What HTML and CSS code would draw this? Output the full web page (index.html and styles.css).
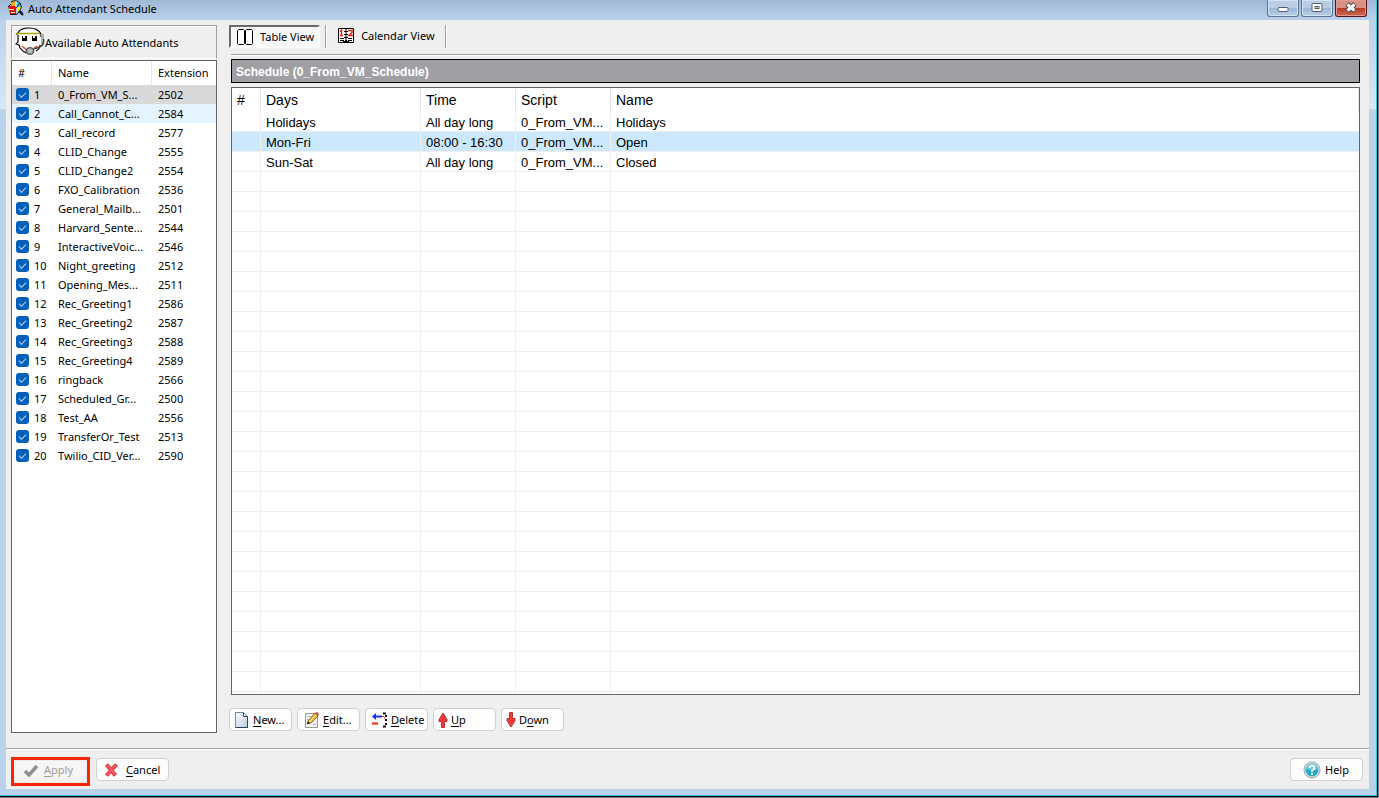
FILE: index.html
```html
<!DOCTYPE html>
<html lang="en">
<head>
<meta charset="utf-8">
<title>Auto Attendant Schedule</title>
<link rel="stylesheet" href="styles.css">
</head>
<body>
<div class="window">
  <header class="titlebar">
    <svg class="app-icon" width="16" height="16" viewBox="0 0 16 16">
      <path d="M3 1h6v6H3z" fill="#f6a800"/><path d="M8 1q5 0 6 6H8z" fill="#2bd2f5"/>
      <path d="M9 7h5q0 5-5 6z" fill="#ffe600"/><path d="M0 6h8v8H2z" fill="#e01414"/>
      <path d="M1 9.500h5M3 12.500h4" stroke="#ff8"/>
      <path d="M3 2q5-3 9 1 3 4 0 8M0 7l3-3M2 14.500h7l2-3M8 8l4-5" stroke="#111" fill="none"/>
      <path d="M8 1v6" stroke="#fff"/>
      <path d="M11 11l4 4" stroke="#111" stroke-width="2"/><path d="M12 10l3 3" stroke="#23f"/>
    </svg>
    <h1 class="title">Auto Attendant Schedule</h1>
    <div class="win-controls">
      <button class="win-btn" aria-label="Minimize"><svg width="12" height="14" viewBox="0 0 12 14"><rect x="1" y="6.500" width="10" height="4" rx="1" fill="#fff" stroke="#555d6b"/></svg></button>
      <button class="win-btn" aria-label="Maximize"><svg width="12" height="14" viewBox="0 0 12 14"><rect x="1" y="2.500" width="10" height="8" rx="1" fill="#fff" stroke="#555d6b"/><rect x="4" y="5.500" width="4" height="2" fill="#a9bfdb" stroke="#555d6b"/></svg></button>
      <button class="win-btn win-close" aria-label="Close"><svg width="12" height="14" viewBox="0 0 12 14"><path d="M2 3l8 7M10 3l-8 7" stroke="#4b4852" stroke-width="5"/><path d="M2.500 3.500l7 6M9.500 3.500l-7 6" stroke="#fff" stroke-width="3"/></svg></button>
    </div>
  </header>

  <div class="content">
    <div class="workspace">
      <section class="sidebar">
        <div class="side-head">
          <svg width="30" height="30" viewBox="0 0 30 30">
            <circle cx="14" cy="16" r="13.500" fill="#fff"/>
            <path d="M3 6Q5 1 14 1T26 7V10M3 6L1 7.500M3 8V15L1 17l3 1 1 3q4 5 8 5M25 18q0 4-4 6" fill="none" stroke="#000" stroke-width="1.200"/>
            <path d="M1 6.500h24" stroke="#a5a500" stroke-width="1.500"/>
            <path d="M7 9h5v5H7zM17 9h5v5h-5z" fill="#000"/><path d="M8 9h2v2H8zM18 9h2v2h-2z" fill="#fff"/>
            <path d="M7 19l6 5M22 19l-5 4" stroke="#e33" stroke-width="1.200"/>
            <path d="M26 7h3v10h-3z" fill="#b0b0b0"/><path d="M28.500 12q1 6-4 8l-5 2" stroke="#444" stroke-width="1.500" fill="none"/>
            <ellipse cx="15" cy="24" rx="4" ry="3.500" fill="#999" stroke="#444"/><path d="M13 23h4M13 25h4" stroke="#ddd"/>
          </svg>
          <h2 class="side-title">Available Auto Attendants</h2>
        </div>
        <div class="side-list">
          <table class="attendants">
            <colgroup><col class="a-num"><col class="a-name"><col></colgroup>
            <thead><tr><th>#</th><th>Name</th><th>Extension</th></tr></thead>
            <tbody>
              <tr class="current"><td><label><input type="checkbox" checked>1</label></td><td>0_From_VM_S...</td><td>2502</td></tr>
              <tr class="hover"><td><label><input type="checkbox" checked>2</label></td><td>Call_Cannot_C...</td><td>2584</td></tr>
              <tr><td><label><input type="checkbox" checked>3</label></td><td>Call_record</td><td>2577</td></tr>
              <tr><td><label><input type="checkbox" checked>4</label></td><td>CLID_Change</td><td>2555</td></tr>
              <tr><td><label><input type="checkbox" checked>5</label></td><td>CLID_Change2</td><td>2554</td></tr>
              <tr><td><label><input type="checkbox" checked>6</label></td><td>FXO_Calibration</td><td>2536</td></tr>
              <tr><td><label><input type="checkbox" checked>7</label></td><td>General_Mailb...</td><td>2501</td></tr>
              <tr><td><label><input type="checkbox" checked>8</label></td><td>Harvard_Sente...</td><td>2544</td></tr>
              <tr><td><label><input type="checkbox" checked>9</label></td><td>InteractiveVoic...</td><td>2546</td></tr>
              <tr><td><label><input type="checkbox" checked>10</label></td><td>Night_greeting</td><td>2512</td></tr>
              <tr><td><label><input type="checkbox" checked>11</label></td><td>Opening_Mes...</td><td>2511</td></tr>
              <tr><td><label><input type="checkbox" checked>12</label></td><td>Rec_Greeting1</td><td>2586</td></tr>
              <tr><td><label><input type="checkbox" checked>13</label></td><td>Rec_Greeting2</td><td>2587</td></tr>
              <tr><td><label><input type="checkbox" checked>14</label></td><td>Rec_Greeting3</td><td>2588</td></tr>
              <tr><td><label><input type="checkbox" checked>15</label></td><td>Rec_Greeting4</td><td>2589</td></tr>
              <tr><td><label><input type="checkbox" checked>16</label></td><td>ringback</td><td>2566</td></tr>
              <tr><td><label><input type="checkbox" checked>17</label></td><td>Scheduled_Gr...</td><td>2500</td></tr>
              <tr><td><label><input type="checkbox" checked>18</label></td><td>Test_AA</td><td>2556</td></tr>
              <tr><td><label><input type="checkbox" checked>19</label></td><td>TransferOr_Test</td><td>2513</td></tr>
              <tr><td><label><input type="checkbox" checked>20</label></td><td>Twilio_CID_Ver...</td><td>2590</td></tr>
            </tbody>
          </table>
        </div>
      </section>

      <main class="main">
        <div class="toolbar">
          <button class="tool pressed">
            <svg width="16" height="16" viewBox="0 0 16 16"><path d="M1.500.500H6.500L7.500 1.500V14.500L6.500 15.500H1.500L.500 14.500V1.500zM9.500.500H14.500L15.500 1.500V14.500L14.500 15.500H9.500L8.500 14.500V1.500z" fill="#fff" stroke="#000"/></svg>
            Table View
          </button>
          <span class="tool-sep"></span>
          <button class="tool">
            <svg width="16" height="16" viewBox="0 0 16 16"><path d="M.500.500H15.500V14.500H.500z" fill="#fff" stroke="#000"/><path d="M7 1h2v14H7zM6 3h4v1H6zM6 6h4v1H6zM6 9h4v1H6zM5 13h6v2H5z" fill="#000"/><path d="M7 2h2M7 5h2M7 8h2M7 11h2" stroke="#fff"/><path d="M2 3.500L3.500 2V7.500M2 7.500h3M11 3.500V2.500h3V4.500L11 7.500h4" stroke="#f21d0c" stroke-width="1.500" fill="none"/><path d="M2 10.500h4M2 12.500h4M10 10.500h4M10 12.500h4" stroke="#000"/></svg>
            Calendar View
          </button>
          <span class="tool-sep"></span>
        </div>
        <h2 class="caption">Schedule (0_From_VM_Schedule)</h2>
        <div class="sched-box">
          <table class="schedule">
            <colgroup><col class="s-num"><col class="s-days"><col class="s-time"><col class="s-script"><col></colgroup>
            <thead><tr><th>#</th><th>Days</th><th>Time</th><th>Script</th><th>Name</th></tr></thead>
            <tbody>
              <tr><td></td><td>Holidays</td><td>All day long</td><td>0_From_VM...</td><td>Holidays</td></tr>
              <tr class="selected"><td></td><td>Mon-Fri</td><td>08:00 - 16:30</td><td>0_From_VM...</td><td>Open</td></tr>
              <tr><td></td><td>Sun-Sat</td><td>All day long</td><td>0_From_VM...</td><td>Closed</td></tr>
              <tr class="blank"><td></td><td></td><td></td><td></td><td></td></tr>
            </tbody>
          </table>
        </div>
        <div class="actions">
          <button class="btn">
            <svg width="16" height="16" viewBox="0 0 16 16"><defs><linearGradient id="page" x1="0" y1="0" x2="1" y2="1"><stop offset="0" stop-color="#fff"/><stop offset="1" stop-color="#b9cbe2"/></linearGradient></defs><path d="M1.500.500H9.500L13.500 4.500V15.500H1.500z" fill="url(#page)" stroke="#6c87aa"/><path d="M9.500.500V4.500H13.500V15.500H1.500" fill="none" stroke="#2d4260"/></svg>
            <span><u>N</u>ew...</span></button>
          <button class="btn btn-edit">
            <svg width="16" height="16" viewBox="0 0 16 16"><path d="M1.500 1.500H13.500V15.500H1.500z" fill="#f4f4f4" stroke="#999"/><path d="M3 4.500h7M3 7.500h4M3 10.500h2M9 12.500h3" stroke="#b5b5b5"/><path d="M3 12L4 9L11 1L14 4L7 11z" fill="#f5bd35" stroke="#6f5018" stroke-width=".8"/><path d="M11 1l2-1 2 2-1 2z" fill="#d04631"/><path d="M3 12l1-3 2 2z" fill="#222"/><path d="M5 10l7-7" stroke="#ffe899"/></svg>
            <span><u>E</u>dit...</span></button>
          <button class="btn btn-delete">
            <svg width="16" height="16" viewBox="0 0 16 16"><path d="M1 4.500h9" stroke="#1535ff" stroke-width="2"/><path d="M0 4.500L4 1V8z" fill="#1535ff"/><path d="M0 11.500h6" stroke="#f22612" stroke-width="2"/><path d="M10 4.500h2.500v2" stroke="#f22612" stroke-dasharray="2 1" fill="none"/><path d="M14 3v11" stroke="#111" stroke-width="2" stroke-dasharray="2 2"/><path d="M11 1.500h3M11 14.500h3" stroke="#111" stroke-width="2"/></svg>
            <span><u>D</u>elete</span></button>
          <button class="btn btn-arrow">
            <svg width="10" height="16" viewBox="0 0 10 16"><path d="M5 1L9 7.500V9.500H6.500V15.500H3.500V9.500H1V7.500z" fill="#f33b3f" stroke="#bc3030"/></svg>
            <span><u>U</u>p</span></button>
          <button class="btn btn-arrow">
            <svg width="10" height="16" viewBox="0 0 10 16"><path d="M5 15L9 8.500V6.500H6.500V.500H3.500V6.500H1V8.500z" fill="#f33b3f" stroke="#bc3030"/></svg>
            <span>D<u>o</u>wn</span></button>
        </div>
      </main>
    </div>

    <footer class="footer">
      <div class="highlight">
        <button class="btn btn-wide" disabled>
          <svg width="16" height="16" viewBox="0 0 16 16"><path d="M2 9l4 4L14 4" stroke="#909090" stroke-width="3.500" fill="none"/></svg>
          <span><u>A</u>pply</span></button>
      </div>
      <button class="btn btn-wide">
        <svg width="16" height="16" viewBox="0 0 16 16"><path d="M2.500 2.500l9 11M12.500 2.500L2.500 13.500" stroke="#cf3037" stroke-width="4"/><path d="M3 3l8.500 10M12 3L3 13" stroke="#ff5a60" stroke-width="2.500"/></svg>
        <span><u>C</u>ancel</span></button>
      <button class="btn btn-wide btn-help">
        <svg width="18" height="18" viewBox="0 0 18 18"><circle cx="9" cy="9" r="8" fill="#dfe5e8" stroke="#9ba5aa"/><circle cx="9" cy="9" r="6.500" fill="#22abc9"/><path d="M3 8q1-5 6-5t6 5q-6 2-12 0z" fill="#63cadd"/><path d="M6.500 7q0-2.500 2.500-2.500T11.500 7Q11.500 8.500 9 9.500V11M9 12v2" fill="none" stroke="#fff" stroke-width="2"/></svg>
        <span>Help</span></button>
    </footer>
  </div>
</div>
</body>
</html>
```
FILE: styles.css
```css
* { box-sizing: border-box; }

body {
  margin: 0;
  height: 100vh;
  padding: 0 1px 1px 0;
  background: #808080;
  color: #000;
  font: 12px/16px "Noto Sans", "Open Sans", sans-serif;
}

.window {
  height: 100%;
  display: flex;
  flex-direction: column;
  padding: 0 8px 7px 6px;
  border-right: 1px solid #000;
  border-bottom: 1px solid #000;
  box-shadow: inset -1px -1px #35c3de;
  background: linear-gradient(#a0b9d7 0, #b9d1ea 20px, #d9e7f5 109px, #b9d1ea 110px);
}

.titlebar {
  flex: none;
  height: 20px;
  margin: 0 -7px 0 -6px;
  padding: 0 9px 0 8px;
  display: flex;
  gap: 4px;
  background: linear-gradient(#a0b9d7, #b9d1ea);
}

.title { margin: 0; flex: 1; font-size: 11px; font-weight: 400; line-height: 18px; }

.win-controls { display: flex; gap: 2px; }

.win-btn {
  width: 32px;
  height: 17px;
  padding: 0;
  display: flex;
  align-items: center;
  justify-content: center;
  border: 1px solid #5f7390;
  border-top: 0;
  border-radius: 0 0 3px 3px;
  box-shadow: inset 0 0 0 1px #d4e3f4;
  background: linear-gradient(#bacde4 50%, #9db9d8 50%, #b9cfe8);
}

.win-close {
  border-color: #56131c;
  box-shadow: inset 0 0 0 1px #e09a8f;
  background: linear-gradient(#dc8f83 50%, #b93923 50%, #cf6a50);
}

.content { flex: 1; min-height: 0; display: flex; flex-direction: column; background: #efefef; }

.workspace { flex: 1; min-height: 0; display: flex; gap: 12px; padding: 5px 9px 15px 5px; }

.sidebar { flex: none; width: 206px; display: flex; flex-direction: column; gap: 1px; }

.side-head {
  flex: none;
  height: 34px;
  display: flex;
  align-items: center;
  padding-left: 3px;
  border: 1px solid;
  border-color: #a0a0a0 #a0a0a0 #fff #a0a0a0;
  box-shadow: inset 1px 1px #fff;
}

.side-title { margin: 0; padding-top: 2px; font-size: 11px; font-weight: 400; white-space: nowrap; }

.side-list { flex: 1; border: 1px solid #646464; background: #fff; overflow: hidden; }

table { width: 100%; table-layout: fixed; border-collapse: separate; border-spacing: 0; }
th, td { padding: 0 0 0 6px; font-weight: 400; text-align: left; white-space: nowrap; }

.attendants { font-size: 11px; }
.attendants th { height: 24px; border-left: 1px solid #e5e5e5; padding-left: 6px; }
.attendants th:first-child { border-left: 0; }
.attendants td { height: 19px; line-height: 17px; padding-left: 7px; }
.attendants td:first-child { padding-left: 4px; }
.a-num { width: 39px; }
.a-name { width: 100px; }
.attendants label { display: flex; align-items: center; gap: 5px; }
.current { background: #d9d9d9; }
.hover { background: #e5f3ff; }

input[type="checkbox"] {
  appearance: none;
  width: 13px;
  height: 13px;
  margin: 0;
  display: grid;
  place-items: center;
  border-radius: 3px;
  background: #005fb8;
}

input[type="checkbox"]::after {
  content: "";
  width: 6px;
  height: 3px;
  margin-top: -2px;
  border: solid #b4d4f0;
  border-width: 0 0 1px 1px;
  transform: rotate(-45deg);
}

.main { flex: 1; min-width: 0; display: flex; flex-direction: column; }

.toolbar {
  flex: none;
  height: 30px;
  display: flex;
  align-items: flex-start;
  gap: 5px;
  margin-left: 2px;
  border-bottom: 1px solid #a0a0a0;
  box-shadow: 0 1px #fff;
}

.tool {
  height: 23px;
  display: flex;
  align-items: center;
  gap: 7px;
  padding: 0 5px 2px 6px;
  border: 0;
  background: none;
  color: #000;
  font: 11px/16px "Noto Sans", sans-serif;
}

.pressed {
  margin-left: -2px;
  padding: 0 4px 0 6px;
  border: 2px solid;
  border-color: #696969 #fff #fff #696969;
  background: #f8f8f8;
}

.tool-sep { width: 2px; height: 23px; background: linear-gradient(90deg, #a0a0a0 50%, #fff 50%); }

.caption {
  flex: none;
  height: 24px;
  margin: 4px 0 4px 2px;
  padding-left: 4px;
  border: 1px solid #000;
  background: #a0a0a4;
  color: #fff;
  font: bold 12px/24px "Liberation Sans", Arial, sans-serif;
}

.sched-box { flex: 1; min-height: 0; margin-left: 2px; border: 1px solid #646464; background: #fff; }

.schedule { height: 100%; font: 13px/17px "Liberation Sans", Arial, sans-serif; }
.schedule th { height: 24px; padding-left: 5px; border-right: 1px solid #e5e5e5; font-size: 14px; }
.schedule td { height: 20px; padding: 2px 0 0 5px; border-right: 1px solid #efefef; border-bottom: 1px solid #efefef; }
.schedule td:last-child { border-right: 0; }
.schedule .blank td { height: auto; border-bottom: 0; background: repeating-linear-gradient(#fff 0 19px, #efefef 19px 20px); }
.s-num { width: 29px; }
.s-days { width: 160px; }
.s-time, .s-script { width: 95px; }
.selected { background: #cce8ff; }

.actions { flex: none; display: flex; gap: 5px; padding: 13px 0 2px; }

.btn {
  width: 63px;
  height: 23px;
  display: flex;
  align-items: center;
  gap: 3px;
  padding: 0 0 0 4px;
  border: 1px solid #d0d0d0;
  border-radius: 4px;
  background: #fdfdfd;
  color: #000;
  font: 11px/16px "Noto Sans", sans-serif;
  white-space: nowrap;
}

.btn u { text-underline-offset: 2px; }
.btn-edit { padding-left: 6px; }
.btn-delete { padding-left: 6px; }
.btn-arrow { padding-left: 4px; }

.footer {
  flex: none;
  display: flex;
  align-items: flex-start;
  gap: 6px;
  height: 41px;
  padding: 8px 6px 0 5px;
  border-top: 1px solid #a0a0a0;
  box-shadow: inset 0 1px #fff;
}

.highlight { height: 29px; border: 3px solid #fa2409; }
.btn-wide { width: 73px; gap: 6px; padding-left: 7px; margin-top: 1px; }
.highlight .btn { margin: 0; padding: 0 0 3px 8px; gap: 5px; background: #f5f5f5; border-color: #ebebeb; color: #9d9d9d; }
.btn-help { margin-left: auto; gap: 4px; padding-left: 12px; }
```
